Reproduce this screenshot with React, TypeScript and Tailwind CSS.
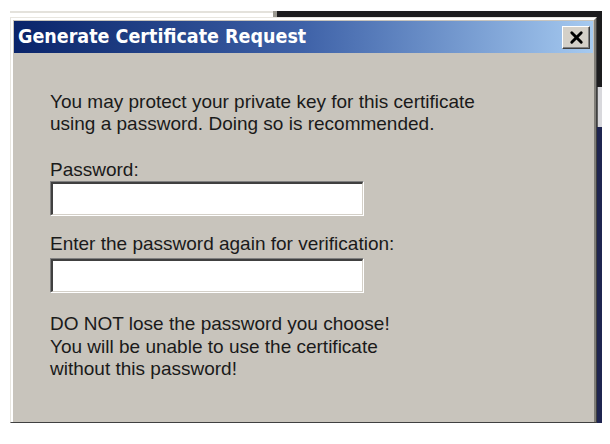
import { X } from "lucide-react";

function PasswordBox() {
  return <div className="h-[35px] w-[314px] border-t border-l border-t-[#808080] border-l-[#808080] border-b border-r border-b-white border-r-white">
    <div className="h-full w-full border-t-2 border-l-2 border-t-[#404040] border-l-[#404040] border-b border-r border-b-[#d4d0c8] border-r-[#d4d0c8] bg-white" />
  </div>;
}

export default function App() {
  return <div className="h-[444px] w-[610px] overflow-hidden bg-white pl-[10px] pt-[11px] font-['Liberation_Sans',Arial,sans-serif]">
    <div className="flex w-[592px] flex-col">
      {/* window behind the dialog */}
      <div className="flex h-[6px]">
        <div className="w-[263px] border-t-2 border-t-[#e4e2dc]" />
        <div className="w-[4px] bg-[#9a9890]" />
        <div className="flex-1 bg-[#1c1c1e]" />
      </div>

      <div className="flex">
        <div className="flex h-[406px] w-[587px] flex-col border border-[#e8e6e0] border-r-[#404040] border-b-[#404040] bg-[#d4d0c8]">
          <div className="flex flex-1 flex-col border-t-2 border-l-2 border-t-white border-l-white border-r-2 border-r-[#807e78] p-[1px] bg-[#c8c4bc]">
            <div className="flex h-[32px] items-center justify-between bg-gradient-to-r from-[#0a246a] via-[#3f62a8] to-[#a6caf0] pl-[4px] pr-[3px]">
              <span className="font-['DejaVu_Sans_Condensed',Tahoma,sans-serif] text-[19.5px] font-bold leading-none text-white">Generate Certificate Request</span>
              <div className="flex h-[23px] w-[28px] items-center justify-center border border-t-white border-l-white border-r-[#404040] border-b-[#404040] bg-[#d4d0c8] shadow-[inset_-1px_-1px_0_#808080]">
                <X size={19} strokeWidth={3.6} className="text-black" />
              </div>
            </div>

            <div className="flex flex-col pl-[36px] pt-[38px] text-[19px] leading-[22px] text-[#1a1a1a]">
              <p>You may protect your private key for this certificate<br />using a password. Doing so is recommended.</p>
              <p className="mt-[24px]">Password:</p>
              <div className="mt-0"><PasswordBox /></div>
              <p className="mt-[17px]">Enter the password again for verification:</p>
              <div className="mt-[3px]"><PasswordBox /></div>
              <p className="mt-[20px] leading-[22.5px]">DO NOT lose the password you choose!<br />You will be unable to use the certificate<br />without this password!</p>
            </div>
          </div>
        </div>

        <div className="flex w-[5px] flex-col">
          <div className="h-[70px] bg-[#1c1c1e]" />
          <div className="h-[40px] border-l border-[#606060] bg-[#d8d8dc]" />
          <div className="flex-1 bg-[#1f2550]" />
        </div>
      </div>
    </div>
  </div>;
}
